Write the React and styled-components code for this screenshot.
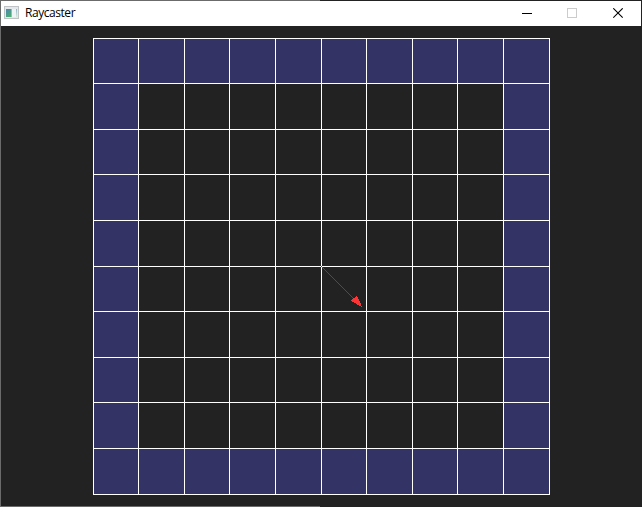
import React from "react";
import styled, { createGlobalStyle } from "styled-components";

const GlobalStyle = createGlobalStyle`
  html, body { margin: 0; padding: 0; background: #222; overflow: hidden; }
  * { box-sizing: border-box; }
`;

const Window = styled.div`
  width: 642px;
  height: 507px;
  padding: 1px;
  display: flex;
  flex-direction: column;
  background:
    linear-gradient(#6b6b6b, #6b6b6b) 0 0 / 1px 100% no-repeat,
    linear-gradient(#6b6b6b, #6b6b6b) 0 0 / 320px 1px no-repeat,
    linear-gradient(#6b6b6b, #6b6b6b) 0 100% / 320px 1px no-repeat,
    #222;
`;

const TitleBar = styled.header`
  height: 25px;
  flex: none;
  display: flex;
  align-items: flex-start;
  background: #fff;
  padding-left: 3px;
`;

const AppIcon = styled.svg`
  width: 16px;
  height: 16px;
  margin-top: 3px;
  display: block;
`;

const Title = styled.span`
  flex: 1;
  margin-left: 5px;
  font: 12px/23px "Open Sans", "Noto Sans", sans-serif;
  letter-spacing: -0.45px;
  color: #000;
`;

const CaptionButton = styled.button`
  width: ${(p) => p.$width || 45}px;
  height: 25px;
  padding: 0;
  border: 0;
  background: transparent;
  color: ${(p) => (p.$disabled ? "#ccc" : "#000")};
  display: flex;
  align-items: center;
  justify-content: center;
`;

const Glyph = styled.svg`
  width: 11px;
  height: 11px;
  display: block;
`;

const Viewport = styled.main`
  flex: 1;
  display: flex;
  align-items: flex-start;
  padding: 12px 0 0 92px;
  background: #222;
`;

const TRACKS = "45px 46px 45px 46px 46px 45px 46px 45px 46px 46px";

const Board = styled.div`
  position: relative;
  display: grid;
  grid-template-columns: ${TRACKS};
  grid-template-rows: ${TRACKS};
  border-right: 1px solid #fff;
  border-bottom: 1px solid #fff;
`;

const Cell = styled.div`
  border-left: 1px solid #fff;
  border-top: 1px solid #fff;
  background: ${(p) => (p.$wall ? "#333366" : "#222222")};
`;

const Ray = styled.svg`
  position: absolute;
  left: 228px;
  top: 228px;
  width: 42px;
  height: 42px;
`;

const SIZE = 10;
const cells = Array.from({ length: SIZE * SIZE }, (_, i) => {
  const x = i % SIZE;
  const y = Math.floor(i / SIZE);
  return x === 0 || y === 0 || x === SIZE - 1 || y === SIZE - 1;
});

export default function App() {
  return (
    <>
      <GlobalStyle />
      <Window>
        <TitleBar>
          <AppIcon viewBox="0 0 16 16" shapeRendering="crispEdges">
            <defs>
              <linearGradient id="pane" x1="0" y1="0" x2="0.6" y2="1">
                <stop offset="0" stopColor="#4f86ae" />
                <stop offset="1" stopColor="#4cae74" />
              </linearGradient>
              <linearGradient id="side" x1="0" y1="0" x2="0" y2="1">
                <stop offset="0" stopColor="#8fb3c6" />
                <stop offset="1" stopColor="#d6ead9" />
              </linearGradient>
            </defs>
            <rect x="0" y="2" width="15" height="13" fill="#bfc3c6" />
            <rect x="1" y="3" width="13" height="11" fill="#e4e8ea" />
            <rect x="2" y="5" width="6" height="8" fill="url(#pane)" />
            <rect x="7" y="5" width="1" height="8" fill="#8fc0b4" />
            <rect x="8" y="5" width="4" height="8" fill="#eef4f6" />
            <rect x="12" y="5" width="1" height="8" fill="url(#side)" />
          </AppIcon>
          <Title>Raycaster</Title>
          <CaptionButton aria-label="Minimize">
            <Glyph viewBox="0 0 11 11" shapeRendering="crispEdges">
              <rect x="0" y="5" width="10" height="1" fill="currentColor" />
            </Glyph>
          </CaptionButton>
          <CaptionButton aria-label="Maximize" $disabled>
            <Glyph viewBox="0 0 11 11" shapeRendering="crispEdges">
              <rect x="0.5" y="0.5" width="9" height="9" fill="none" stroke="currentColor" />
            </Glyph>
          </CaptionButton>
          <CaptionButton aria-label="Close" $width={46}>
            <Glyph viewBox="0 0 11 11">
              <path d="M0.3 0.3L9.7 9.7M9.7 0.3L0.3 9.7" stroke="currentColor" strokeWidth="1.1" />
            </Glyph>
          </CaptionButton>
        </TitleBar>
        <Viewport>
          <Board>
            {cells.map((wall, i) => (
              <Cell key={i} $wall={wall} />
            ))}
            <Ray viewBox="0 0 42 42" shapeRendering="crispEdges">
              <path d="M0 0L34 34" stroke="#f00" strokeWidth="1" />
              <path d="M41.3 41.3L29.8 34.8L35.8 29.6Z" fill="#f33" />
            </Ray>
          </Board>
        </Viewport>
      </Window>
    </>
  );
}
